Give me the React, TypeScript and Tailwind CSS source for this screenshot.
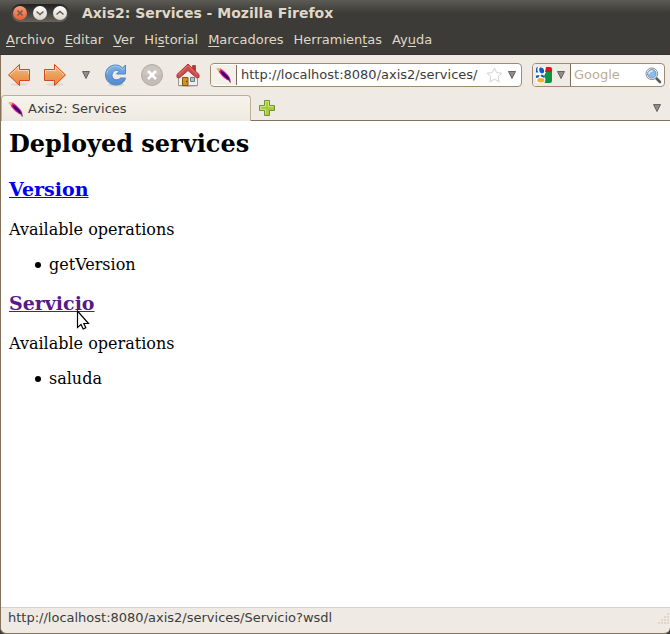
import type { ReactNode } from 'react'

const menus = [
  { before: '', key: 'A', after: 'rchivo' },
  { before: '', key: 'E', after: 'ditar' },
  { before: '', key: 'V', after: 'er' },
  { before: 'Hi', key: 's', after: 'torial' },
  { before: '', key: 'M', after: 'arcadores' },
  { before: 'Herramien', key: 't', after: 'as' },
  { before: 'Ay', key: 'u', after: 'da' },
]

const services = [
  { name: 'Version', operations: ['getVersion'], visited: false },
  { name: 'Servicio', operations: ['saluda'], visited: true },
]

function Feather() {
  return (
    <svg width="16" height="16" viewBox="0 0 16 16" className="shrink-0">
      <path d="M2 2.500 4.500 1.500 8 4 12 8 14 11 14.500 14 11 13 7 10 3.500 6Z" fill="#e8186d" />
      <path d="M4.500 3.500 8 5.500 12 9.500 13.500 13 10 11 6 7.500Z" fill="#4a0d9c" />
      <path d="M5 4.500 13 12.500" stroke="#1d0a7a" strokeWidth="1.300" />
      <path d="M.5 1H3.500L4.500 2.500 3 4.500 1 3Z" fill="#d9bd79" />
      <path d="M13 12.500 14.500 15.500" stroke="#4b4b52" strokeWidth="1.200" />
    </svg>
  )
}

function Triangle() {
  return (
    <svg width="8" height="8" viewBox="0 0 8 8">
      <path d="M.5.5h7L4 7.500Z" fill="#8f8d88" stroke="#66635d" strokeWidth="1" />
    </svg>
  )
}

function Arrow({ forward = false }: { forward?: boolean }) {
  return (
    <svg width="24" height="24" viewBox="0 0 24 24">
      <defs>
        <linearGradient id={forward ? 'fwd' : 'back'} x1="0" y1="0" x2="0" y2="1">
          <stop offset="0" stopColor="#f7c08c" />
          <stop offset=".5" stopColor="#e9a05a" />
          <stop offset="1" stopColor="#f08232" />
        </linearGradient>
      </defs>
      <ellipse cx="12" cy="21.500" rx="9" ry="1.500" fill="#dfd8cf" />
      <g transform={forward ? 'translate(24 0) scale(-1 1)' : undefined}>
        <path d="M1.500 12 12.500 1.500V6.500H22.500V17.500H12.500V22.500Z" fill={forward ? 'url(#fwd)' : 'url(#back)'} stroke="#cf4a16" strokeLinejoin="round" />
        <path d="M3 12 11.500 3.800V7.500H21.500V11" stroke="#fbd9b5" fill="none" />
      </g>
    </svg>
  )
}

function Reload() {
  return (
    <svg width="24" height="24" viewBox="0 0 24 24">
      <defs>
        <linearGradient id="reload" x1="0" y1="0" x2="0" y2="1">
          <stop offset="0" stopColor="#7fb0e2" />
          <stop offset="1" stopColor="#5089cb" />
        </linearGradient>
      </defs>
      <ellipse cx="12" cy="22" rx="8" ry="1.400" fill="#dad3c9" />
      <path
        d="M21.500 2V11H12.500L15.500 8C12 6 8 8.500 8 12.500C8 17 14 18 16.500 15H21.500C20.500 19.500 16.500 22 12 22C6 22 1.500 17.500 1.500 12C1.500 6 6 2 11.500 2C14.500 2 16.500 3 18.500 5Z"
        fill="url(#reload)"
        stroke="#4f88c9"
        strokeLinejoin="round"
      />
      <path d="M2.800 11C3.500 6 8 3 11.500 3.200C14.500 3.300 16.500 4.500 18.500 6.500L20.500 4.500" stroke="#a6caee" fill="none" />
    </svg>
  )
}

function Stop() {
  return (
    <svg width="24" height="24" viewBox="0 0 24 24">
      <circle cx="12" cy="12" r="10.500" fill="#c3bdb6" stroke="#b3ada6" />
      <path d="M2.500 12a9.500 9.500 0 0 1 19 0Z" fill="#cbc6bf" />
      <path d="M8 8 16 16M16 8 8 16" stroke="#fff" strokeWidth="2.600" />
    </svg>
  )
}

function Home() {
  return (
    <svg width="24" height="24" viewBox="0 0 24 24">
      <ellipse cx="12" cy="22.700" rx="10" ry="1.200" fill="#bdb6ac" />
      <path d="M16.500 2.500h3V8h-3Z" fill="#b33" stroke="#8e2424" strokeWidth=".6" />
      <path d="M2.500 12.500 12 5 21.500 12.500V22.500H2.500Z" fill="#efeeec" stroke="#9b968f" />
      <path d="M6.500 14.500h5.500v8h-5.500Z" fill="#d5931c" stroke="#82550f" />
      <circle cx="10.500" cy="18.500" r=".7" fill="#5c3a07" />
      <path d="M14.500 14.500h4v4h-4Z" fill="#a7c6c4" stroke="#667d80" />
      <path d="M12 1 1 11.500V14.500L3.500 14.800 12 7.500 20.500 14.800 23 14.500V11.500Z" fill="#cc4c4c" stroke="#b23232" strokeLinejoin="round" />
      <path d="M2.500 11.800 12 2.500 21.500 11.800" stroke="#e27d7b" fill="none" />
    </svg>
  )
}

function GoogleLogo() {
  return (
    <svg width="16" height="16" viewBox="0 0 16 16">
      <path d="M2 0H14Q16 0 16 2V14Q16 16 14 16H2Q0 16 0 14V2Q0 0 2 0Z" fill="#fff" />
      <path d="M10 0H14Q16 0 16 2V5H9Z" fill="#e8101c" />
      <path d="M10 5H16V14Q16 16 14 16H8.500Q10.500 12 8 9Z" fill="#0d9543" />
      <path d="M0 5.500V2Q0 0 2 0Q.5 3 2.500 5.500Z" fill="#1558c0" />
      <path d="M4 .5C7 0 8.500 2.500 8 5C7.500 7 4.500 7 3.500 4.500C3 3 3 1.500 4 .5Z" fill="#1558c0" />
      <path d="M5.500 7.500C8 8 9 9.500 8.500 11C7 10 5 10 4.500 9Z" fill="#1558c0" />
      <path d="M0 8.500 3.500 8 2.500 10.500 0 11Z" fill="#1558c0" />
      <ellipse cx="4.800" cy="13.300" rx="3.600" ry="2.200" fill="#f3b125" />
    </svg>
  )
}

function Magnifier() {
  return (
    <svg width="17" height="17" viewBox="0 0 17 17">
      <path d="M11 11 15 15" stroke="#5d5a56" strokeWidth="2.600" strokeLinecap="round" />
      <circle cx="6.800" cy="6.800" r="5.800" fill="#fff" stroke="#8e8b86" strokeWidth="1" />
      <circle cx="6.800" cy="6.800" r="4.300" fill="#8fbbe9" stroke="#5585bd" strokeWidth=".8" />
      <path d="M4 7C4 5 5.500 3.800 8 4" stroke="#d6e8fa" strokeWidth="1.600" fill="none" />
    </svg>
  )
}

function Cursor() {
  return (
    <svg width="14" height="20" viewBox="0 0 14 20" className="pointer-events-none absolute left-[67px] top-[18px]">
      <path d="M1.500 1V17.500L5 14.500 7.200 19 9.800 17.700 7.800 13.500H12.500Z" fill="#fff" stroke="#000" strokeWidth="1.200" />
    </svg>
  )
}

function WindowButton({ label, close = false, children }: { label: string; close?: boolean; children: ReactNode }) {
  return (
    <button
      aria-label={label}
      className={`flex size-[14px] items-center justify-center rounded-full ${
        close ? 'bg-linear-to-b from-[#f79a77] to-[#e5602f]' : 'bg-linear-to-b from-white to-[#d8d3c9]'
      }`}
    >
      <svg width="8" height="8" viewBox="0 0 8 8" fill="none" stroke="#6b5a50" strokeWidth="1.500">
        {children}
      </svg>
    </button>
  )
}

function TitleBar() {
  return (
    <header className="flex h-[26px] items-center gap-[13px] bg-linear-to-b from-[#5c5b55] to-[#3d3b37] to-50% pl-[11px]">
      <div className="flex h-[18px] items-center gap-[6px] rounded-full bg-linear-to-b from-[#22211f] to-[#65645e] px-[2px]">
        <WindowButton label="Cerrar" close>
          <path d="M1.500 1.500l5 5M6.500 1.500l-5 5" />
        </WindowButton>
        <WindowButton label="Minimizar">
          <path d="M.5 2.500 4 5.500 7.500 2.500" />
        </WindowButton>
        <WindowButton label="Maximizar">
          <path d="M.5 5.500 4 2.500 7.500 5.500" />
        </WindowButton>
      </div>
      <h1 className="text-sm font-bold text-[#dfd8c8]">Axis2: Services - Mozilla Firefox</h1>
    </header>
  )
}

function MenuBar() {
  return (
    <nav className="flex h-[29px] items-center gap-[10px] border-b border-[#3a3134] bg-[#3d3b37] pl-[6px] text-[#dfd8c8]">
      {menus.map(({ before, key, after }) => (
        <button key={before + key + after} className="whitespace-nowrap">
          {before}
          <span className="underline underline-offset-2">{key}</span>
          {after}
        </button>
      ))}
    </nav>
  )
}

function Toolbar() {
  return (
    <div className="flex h-10 items-center pl-[6px] pr-[5px]">
      <div className="flex shrink-0 items-center gap-3">
        <button aria-label="Atrás"><Arrow /></button>
        <button aria-label="Adelante"><Arrow forward /></button>
        <button aria-label="Páginas recientes" className="flex w-[13px] justify-center"><Triangle /></button>
        <button aria-label="Recargar"><Reload /></button>
        <button aria-label="Detener"><Stop /></button>
        <button aria-label="Inicio"><Home /></button>
      </div>
      <div className="ml-[10px] flex h-6 min-w-0 flex-1 items-center rounded-[4px] border border-[#9c8b6e] bg-white">
        <div className="flex h-5 w-[26px] shrink-0 items-center justify-center border-r border-[#7d6b55] bg-[#f4f0ea]">
          <Feather />
        </div>
        <input aria-label="Dirección" defaultValue="http://localhost:8080/axis2/services/" className="min-w-0 flex-1 pl-1 text-[#3c3c3c] outline-none" />
        <button aria-label="Añadir a marcadores" className="shrink-0">
          <svg width="17" height="16" viewBox="0 0 17 16">
            <path d="M8.500 1 10.700 5.700 16 6.200 12 9.700 13.200 14.800 8.500 12.200 3.800 14.800 5 9.700 1 6.200 6.300 5.700Z" fill="#fff" stroke="#d2d2d2" strokeLinejoin="round" />
          </svg>
        </button>
        <button aria-label="Historial de direcciones" className="mx-[5px] shrink-0"><Triangle /></button>
      </div>
      <div className="ml-[10px] flex h-6 w-[133px] shrink-0 items-center rounded-[4px] border border-[#9c8b6e] bg-white pr-[2px]">
        <button aria-label="Motor de búsqueda" className="flex h-[22px] w-[38px] shrink-0 items-center gap-[5px] rounded-l-[3px] border-r border-[#7d6b55] bg-[#f0ebe4] pl-[3px]">
          <GoogleLogo />
          <Triangle />
        </button>
        <input aria-label="Buscar" placeholder="Google" className="min-w-0 flex-1 pl-[3px] outline-none placeholder:text-[#bbad92]" />
        <button aria-label="Iniciar búsqueda" className="shrink-0"><Magnifier /></button>
      </div>
    </div>
  )
}

function TabStrip() {
  return (
    <div className="flex h-[26px] items-center bg-linear-to-t from-[#85725a] from-[1px] to-transparent to-[1px] pr-[9px]">
      <button className="flex h-[26px] w-[250px] items-center gap-1 rounded-t-[4px] border border-b-0 border-[#bdb09a] bg-linear-to-b from-[#f6f3ed] to-[#efeae0] pl-[6px] text-[#3c3c3c]">
        <Feather />
        Axis2: Services
      </button>
      <button aria-label="Abrir una pestaña nueva" className="ml-2">
        <svg width="16" height="16" viewBox="0 0 16 16">
          <path d="M5.500.5h5v5h5v5h-5v5h-5v-5h-5v-5h5Z" fill="#a9c940" stroke="#6c9432" />
          <path d="M6.500 14.500v-5h-5v-3h5v-5h3v5h5" stroke="#d0e57c" fill="none" />
        </svg>
      </button>
      <button aria-label="Listar todas las pestañas" className="ml-auto"><Triangle /></button>
    </div>
  )
}

export default function App() {
  return (
    <div className="flex min-h-screen flex-col bg-[#3d3b37] font-['DejaVu_Sans',sans-serif] text-[13px]">
      <TitleBar />
      <MenuBar />
      <div className="flex flex-1 flex-col overflow-hidden rounded-b-[6px] border-b border-l border-[#85725a] bg-[#efebe4]">
        <Toolbar />
        <TabStrip />
        <main className="flex-1 bg-white px-2 pt-[9px] font-['DejaVu_Serif',serif] text-base leading-[19px] text-black">
          <h2 className="mb-5 text-2xl leading-7 font-bold">Deployed services</h2>
          {services.map(({ name, operations, visited }) => (
            <section key={name} className="relative mb-[18px]">
              <h3 className="mb-5 text-[19px] leading-[22px] font-bold">
                <a href="#" className={`underline ${visited ? 'text-[#551a8b]' : 'text-[#0000ee]'}`}>{name}</a>
              </h3>
              <p className="mb-4">Available operations</p>
              <ul className="pl-[26px]">
                {operations.map((op) => (
                  <li key={op} className="flex items-center gap-2 before:size-[6px] before:rounded-full before:bg-black">{op}</li>
                ))}
              </ul>
              {visited && <Cursor />}
            </section>
          ))}
        </main>
        <footer className="flex h-[26px] items-center border-t border-[#d8d1c5] pb-[5px] pl-[7px] text-[#3c3c3c]">
          <span>http://localhost:8080/axis2/services/Servicio?wsdl</span>
          <svg width="12" height="12" viewBox="0 0 12 12" className="ml-auto" fill="#ddd6ca">
            <path d="M9 1h2v2h-2zM6 4h2v2h-2zM9 4h2v2h-2zM3 7h2v2h-2zM6 7h2v2h-2zM9 7h2v2h-2zM0 10h2v2h-2zM3 10h2v2h-2zM6 10h2v2h-2zM9 10h2v2h-2z" />
          </svg>
        </footer>
      </div>
    </div>
  )
}
